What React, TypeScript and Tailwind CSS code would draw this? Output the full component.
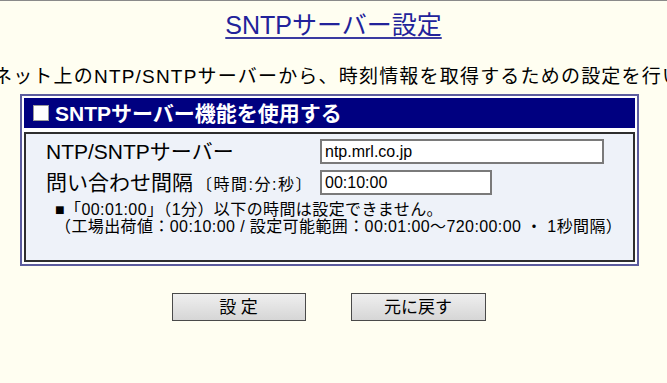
const jp = { fontFamily: '"Liberation Sans", "Noto Sans CJK JP", sans-serif' }

function SettingRow({ label, hint, value, inputWidth }: { label: string; hint?: string; value: string; inputWidth: string }) {
  return (
    <div className="flex h-[25px] items-center">
      <div className="flex w-[274px] items-baseline">
        <span className="text-[21px] leading-none text-black">{label}</span>
        {hint && <span className="ml-[3px] text-[16px] leading-none tracking-[1.5px] text-black">{hint}</span>}
      </div>
      <input
        readOnly
        value={value}
        className={`${inputWidth} h-[25px] border-2 border-[#7a7a7a] bg-white px-[3px] text-[16px] text-black outline-none`}
        style={jp}
      />
    </div>
  )
}

export default function App() {
  return (
    <div className="min-h-[383px] w-full overflow-hidden border-t border-[#8a8a8a] bg-[#fffef1]" style={jp}>
      <h1 className="mt-[9px] text-center text-[25px] leading-[30px]">
        <span className="text-[#22229a] underline decoration-[#3a3aa0] decoration-2 underline-offset-[3px]">
          SNTPサーバー設定
        </span>
      </h1>

      <div className="mt-[25px] flex justify-center whitespace-nowrap pr-[14px] text-[19px] leading-[24px] tracking-[1.2px] text-black">
        <p>インターネット上のNTP/SNTPサーバーから、時刻情報を取得するための設定を行います。</p>
      </div>

      <div className="ml-[20px] mt-[5px] flex w-[619px] flex-col gap-[4px] border-2 border-[#5c5c9e] bg-white p-[2px]">
        <div className="flex h-[30px] items-center bg-[#000080] pl-[9px]">
          <span className="h-[16px] w-[16px] border border-[#9a9a9a] bg-white" />
          <span className="ml-[6px] text-[21px] font-bold leading-none text-white">SNTPサーバー機能を使用する</span>
        </div>

        <div className="flex h-[130px] flex-col border-2 border-[#2e2e2e] bg-[#eef2f9] pl-[20px] pt-[5px]">
          <div className="flex flex-col gap-[6px]">
            <SettingRow label="NTP/SNTPサーバー" value="ntp.mrl.co.jp" inputWidth="w-[284px]" />
            <SettingRow label="問い合わせ間隔" hint="〔時間:分:秒〕" value="00:10:00" inputWidth="w-[172px]" />
          </div>
          <p className="ml-[9px] mt-[6px] text-[16px] leading-[17px] tracking-[0.4px] text-black">
            ■「00:01:00」（1分）以下の時間は設定できません。
            <br />
            （工場出荷値：00:10:00 / 設定可能範囲：00:01:00〜720:00:00 ・ 1秒間隔）
          </p>
        </div>
      </div>

      <div className="mt-[27px] flex justify-center gap-[45px] pr-[10px]">
        <button className="h-[28px] w-[134px] border border-[#4a4a4a] bg-gradient-to-b from-[#efefef] to-[#d6d6d6] text-[17px] leading-none text-black">
          設 定
        </button>
        <button className="h-[28px] w-[135px] border border-[#4a4a4a] bg-gradient-to-b from-[#efefef] to-[#d6d6d6] text-[17px] leading-none text-black">
          元に戻す
        </button>
      </div>
    </div>
  )
}
